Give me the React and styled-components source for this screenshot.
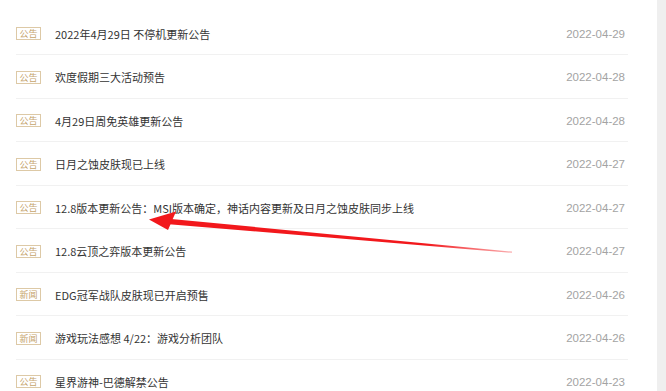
import React from "react";
import styled, { createGlobalStyle } from "styled-components";

const Global = createGlobalStyle`
  html, body { margin: 0; padding: 0; background: #fff; }
  body { width: 666px; height: 391px; overflow: hidden; }
`;

const Page = styled.div`
  position: relative;
  display: flex;
  width: 666px;
  height: 391px;
  overflow: hidden;
  background: #fff;
`;

const Main = styled.div`
  flex: 0 0 657px;
  padding: 11.5px 29px 0 16px;
  box-sizing: border-box;
`;

const Scrollbar = styled.div`
  flex: 0 0 9px;
  background: #efefef;
`;

const List = styled.ul`
  list-style: none;
  margin: 0;
  padding: 0;
`;

const Row = styled.li`
  display: flex;
  align-items: center;
  height: 43.5px;
  padding-top: 2px;
  box-sizing: border-box;
  border-bottom: 1px solid #f1f1f1;
  font-family: "Noto Sans CJK SC", "Noto Sans", sans-serif;
`;

const Badge = styled.span`
  flex: 0 0 auto;
  display: inline-flex;
  align-items: center;
  justify-content: center;
  width: 25px;
  height: 13px;
  box-sizing: border-box;
  border: 1px solid #ddc9a6;
  color: #c6a56e;
  font-size: 9px;
  line-height: 1;
  margin-right: 14px;
`;

const Title = styled.span`
  flex: 1 1 auto;
  color: #333;
  font-size: 11px;
  white-space: nowrap;
`;

const DateText = styled.span`
  flex: 0 0 auto;
  color: #a3a3a3;
  font-family: "Liberation Sans", Arial, sans-serif;
  font-size: 11.5px;
  padding-right: 3px;
`;

const Arrow = styled.svg`
  position: absolute;
  left: 0;
  top: 0;
  pointer-events: none;
`;

const items = [
  ["公告", "2022年4月29日 不停机更新公告", "2022-04-29"],
  ["公告", "欢度假期三大活动预告", "2022-04-28"],
  ["公告", "4月29日周免英雄更新公告", "2022-04-28"],
  ["公告", "日月之蚀皮肤现已上线", "2022-04-27"],
  ["公告", "12.8版本更新公告：MSI版本确定，神话内容更新及日月之蚀皮肤同步上线", "2022-04-27"],
  ["公告", "12.8云顶之弈版本更新公告", "2022-04-27"],
  ["新闻", "EDG冠军战队皮肤现已开启预售", "2022-04-26"],
  ["新闻", "游戏玩法感想 4/22：游戏分析团队", "2022-04-26"],
  ["公告", "星界游神-巴德解禁公告", "2022-04-23"],
];

export default function App() {
  return (
    <Page>
      <Global />
      <Main>
        <List>
          {items.map(([tag, title, date], i) => (
            <Row key={i}>
              <Badge>{tag}</Badge>
              <Title>{title}</Title>
              <DateText>{date}</DateText>
            </Row>
          ))}
        </List>
      </Main>
      <Scrollbar />
      <Arrow width="666" height="391" viewBox="0 0 666 391">
        <defs>
          <linearGradient id="fade" x1="165" y1="0" x2="512" y2="0" gradientUnits="userSpaceOnUse">
            <stop offset="0" stopColor="#f2181c" />
            <stop offset="0.75" stopColor="#f2181c" />
            <stop offset="1" stopColor="#f2181c" stopOpacity="0.35" />
          </linearGradient>
        </defs>
        <polygon points="166,218.5 512,251.6 512,252.8 166,224" fill="url(#fade)" />
        <polygon points="149,219.5 176,211.5 168,230" fill="#f2181c" />
      </Arrow>
    </Page>
  );
}
